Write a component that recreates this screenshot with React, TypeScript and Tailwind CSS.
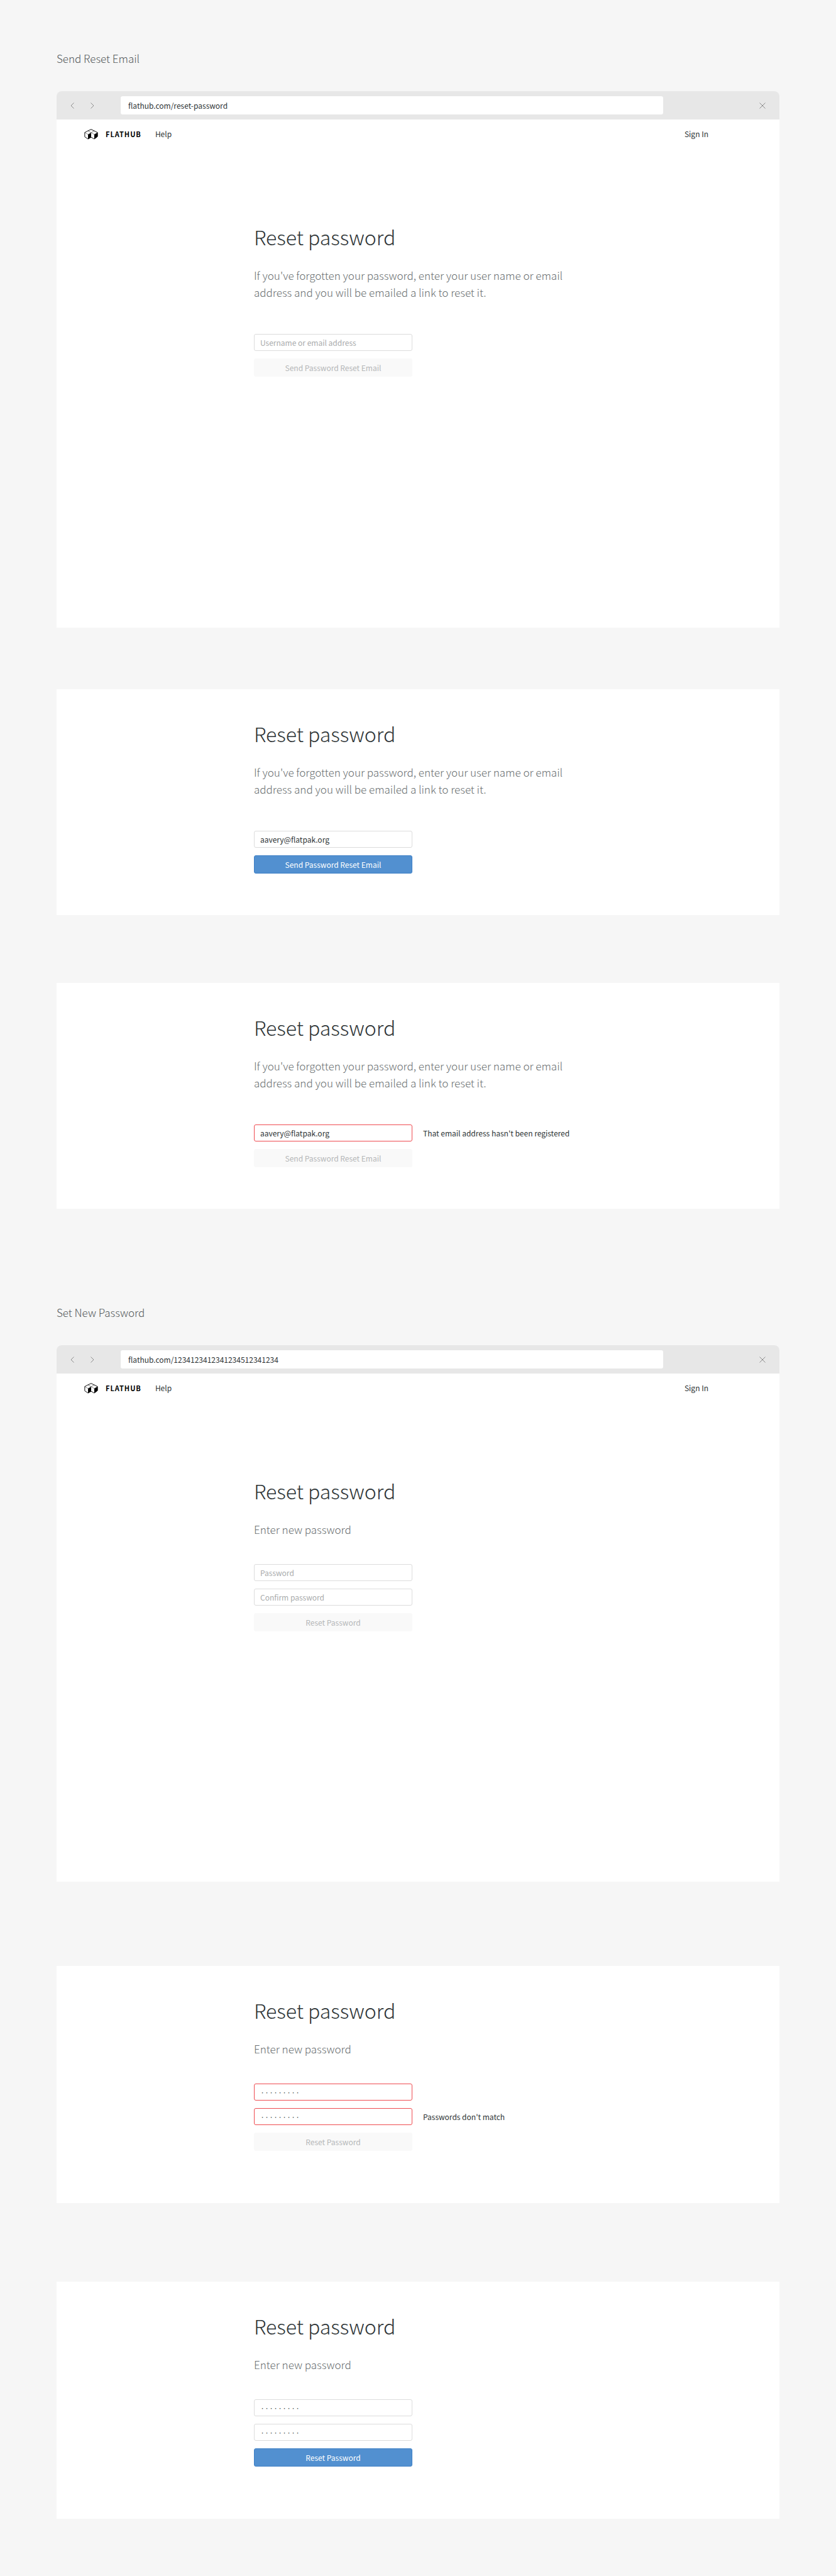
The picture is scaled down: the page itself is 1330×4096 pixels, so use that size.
import type { ReactNode } from "react";

function Logo() {
  return (
    <svg viewBox="0 0 46 36" className="h-[17px] w-[22px]" aria-hidden="true">
      <g fill="none" stroke="#000" strokeWidth="2" strokeLinejoin="round">
        <path d="M12 6.500 L23 1.500 L44.500 12 V25.500 L33.500 34 L23 28 L12.500 34 L1.500 26.500 V12 Z" />
        <path d="M1.500 12 L12.500 18.500 L23 12.500 L33.500 18.500 L44.500 12" strokeWidth="1" />
        <path d="M12 6.500 L23 12.500 L34 6.500" strokeWidth="1" />
      </g>
      <path d="M12.500 19 L23 13 V28 L12.500 34.500 Z M33.500 19 L44.500 12.500 V26.500 L33.500 34.500 Z" fill="#000" />
    </svg>
  );
}

function SectionTitle({ children }: { children: ReactNode }) {
  return <h2 className="text-[17px] leading-[26px] font-light text-[#555a5c]">{children}</h2>;
}

function Browser({ url, children }: { url: string; children: ReactNode }) {
  return (
    <section className="mt-[39px] flex min-h-[853px] flex-col overflow-hidden rounded-t-lg bg-white">
      <div className="flex h-[45px] items-center bg-[#e7e7e7] px-[22px] text-[#8d8d8d]">
        <div className="flex w-20 items-center gap-[26px]">
          <button type="button" aria-label="Back">
            <svg viewBox="0 0 6 10" className="h-[10px] w-[6px]" fill="none" stroke="currentColor">
              <path d="M5.500 0.500 L1 5 L5.500 9.500" />
            </svg>
          </button>
          <button type="button" aria-label="Forward">
            <svg viewBox="0 0 6 10" className="h-[10px] w-[6px]" fill="none" stroke="currentColor">
              <path d="M0.500 0.500 L5 5 L0.500 9.500" />
            </svg>
          </button>
        </div>
        <input
          type="text"
          aria-label="Address"
          defaultValue={url}
          className="h-[29px] min-w-0 flex-1 rounded-[3px] bg-white px-3 text-[12px] text-[#2e3436]"
        />
        <button type="button" aria-label="Close" className="ml-[153px]">
          <svg viewBox="0 0 10 10" className="size-[10px]" fill="none" stroke="currentColor">
            <path d="M0.500 0.500 L9.500 9.500 M9.500 0.500 L0.500 9.500" />
          </svg>
        </button>
      </div>
      <nav className="flex h-[46px] items-center pr-[113px] pl-[44px] text-[12px] text-[#2e3436]">
        <a href="#home" className="flex items-center gap-3">
          <Logo />
          <span className="text-[11px] font-bold tracking-[1px] text-black">FLATHUB</span>
        </a>
        <a href="#help" className="ml-[22px]">Help</a>
        <a href="#signin" className="ml-auto">Sign In</a>
      </nav>
      <div className="pt-[116px]">{children}</div>
    </section>
  );
}

function EmailForm({ children }: { children: ReactNode }) {
  return (
    <form className="mx-auto w-full max-w-[522px]">
      <h1 className="text-[32px] leading-[48px] font-light text-[#2e3436]">Reset password</h1>
      <p className="mt-6 text-[17px] leading-[27px] font-light text-[#6a6f71]">
        If you've forgotten your password, enter your user name or email address and you will be emailed a link to
        reset it.
      </p>
      <div className="mt-[53px] flex flex-col gap-3">{children}</div>
    </form>
  );
}

function PasswordForm({ children }: { children: ReactNode }) {
  return (
    <form className="mx-auto w-full max-w-[522px]">
      <h1 className="text-[32px] leading-[48px] font-light text-[#2e3436]">Reset password</h1>
      <p className="mt-6 text-[17px] leading-[27px] font-light text-[#6a6f71]">Enter new password</p>
      <div className="mt-[42px] flex flex-col gap-3">{children}</div>
    </form>
  );
}

type FieldProps = {
  label: string;
  type?: "text" | "password";
  value?: string;
  invalid?: boolean;
  message?: string;
};

function Field({ label, type = "text", value, invalid = false, message }: FieldProps) {
  const border = invalid ? "border-[#ef4b50]" : "border-[#dcdcdc]";
  const size = type === "password" && value ? "text-[7px]" : "text-[12px]";
  return (
    <div className="flex items-center gap-[17px]">
      <input
        type={type}
        aria-label={label}
        placeholder={label}
        defaultValue={value}
        aria-invalid={invalid}
        className={`${border} ${size} h-[27px] w-[252px] rounded-[3px] border bg-white px-[9px] text-[#2e3436] placeholder:text-[#a9abac]`}
      />
      {message && <span className="text-[12px] leading-4 text-[#2e3436]">{message}</span>}
    </div>
  );
}

function Submit({ disabled = false, children }: { disabled?: boolean; children: ReactNode }) {
  const tone = disabled
    ? "border-[#f9f9f9] bg-[#f9f9f9] text-[#b5b7b8]"
    : "border-[#3f80c6] bg-[#5290d0] text-white";
  return (
    <button
      type="button"
      disabled={disabled}
      className={`${tone} h-[29px] w-[252px] rounded-[3px] border text-[12px] leading-4`}
    >
      {children}
    </button>
  );
}

export default function App() {
  return (
    <main className="min-h-screen bg-[#f6f6f6] px-[90px] pt-20 pb-[90px] font-['Noto_Sans_CJK_SC',sans-serif]">
      <SectionTitle>Send Reset Email</SectionTitle>
      <Browser url="flathub.com/reset-password">
        <EmailForm>
          <Field label="Username or email address" />
          <Submit disabled>Send Password Reset Email</Submit>
        </EmailForm>
      </Browser>
      <div className="mt-[98px] mb-[152px] flex flex-col gap-[108px]">
        <section className="bg-white pt-[46px] pb-[66px]">
          <EmailForm>
            <Field label="Username or email address" value="aavery@flatpak.org" />
            <Submit>Send Password Reset Email</Submit>
          </EmailForm>
        </section>
        <section className="bg-white pt-[46px] pb-[66px]">
          <EmailForm>
            <Field
              label="Username or email address"
              value="aavery@flatpak.org"
              invalid
              message="That email address hasn't been registered"
            />
            <Submit disabled>Send Password Reset Email</Submit>
          </EmailForm>
        </section>
      </div>

      <SectionTitle>Set New Password</SectionTitle>
      <Browser url="flathub.com/1234123412341234512341234">
        <PasswordForm>
          <Field label="Password" type="password" />
          <Field label="Confirm password" type="password" />
          <Submit disabled>Reset Password</Submit>
        </PasswordForm>
      </Browser>
      <div className="mt-[134px] flex flex-col gap-[125px]">
        <section className="bg-white pt-[46px] pb-[83px]">
          <PasswordForm>
            <Field label="Password" type="password" value="flatpak12" invalid />
            <Field
              label="Confirm password"
              type="password"
              value="flatpak21"
              invalid
              message="Passwords don't match"
            />
            <Submit disabled>Reset Password</Submit>
          </PasswordForm>
        </section>
        <section className="bg-white pt-[46px] pb-[83px]">
          <PasswordForm>
            <Field label="Password" type="password" value="flatpak12" />
            <Field label="Confirm password" type="password" value="flatpak12" />
            <Submit>Reset Password</Submit>
          </PasswordForm>
        </section>
      </div>
    </main>
  );
}
